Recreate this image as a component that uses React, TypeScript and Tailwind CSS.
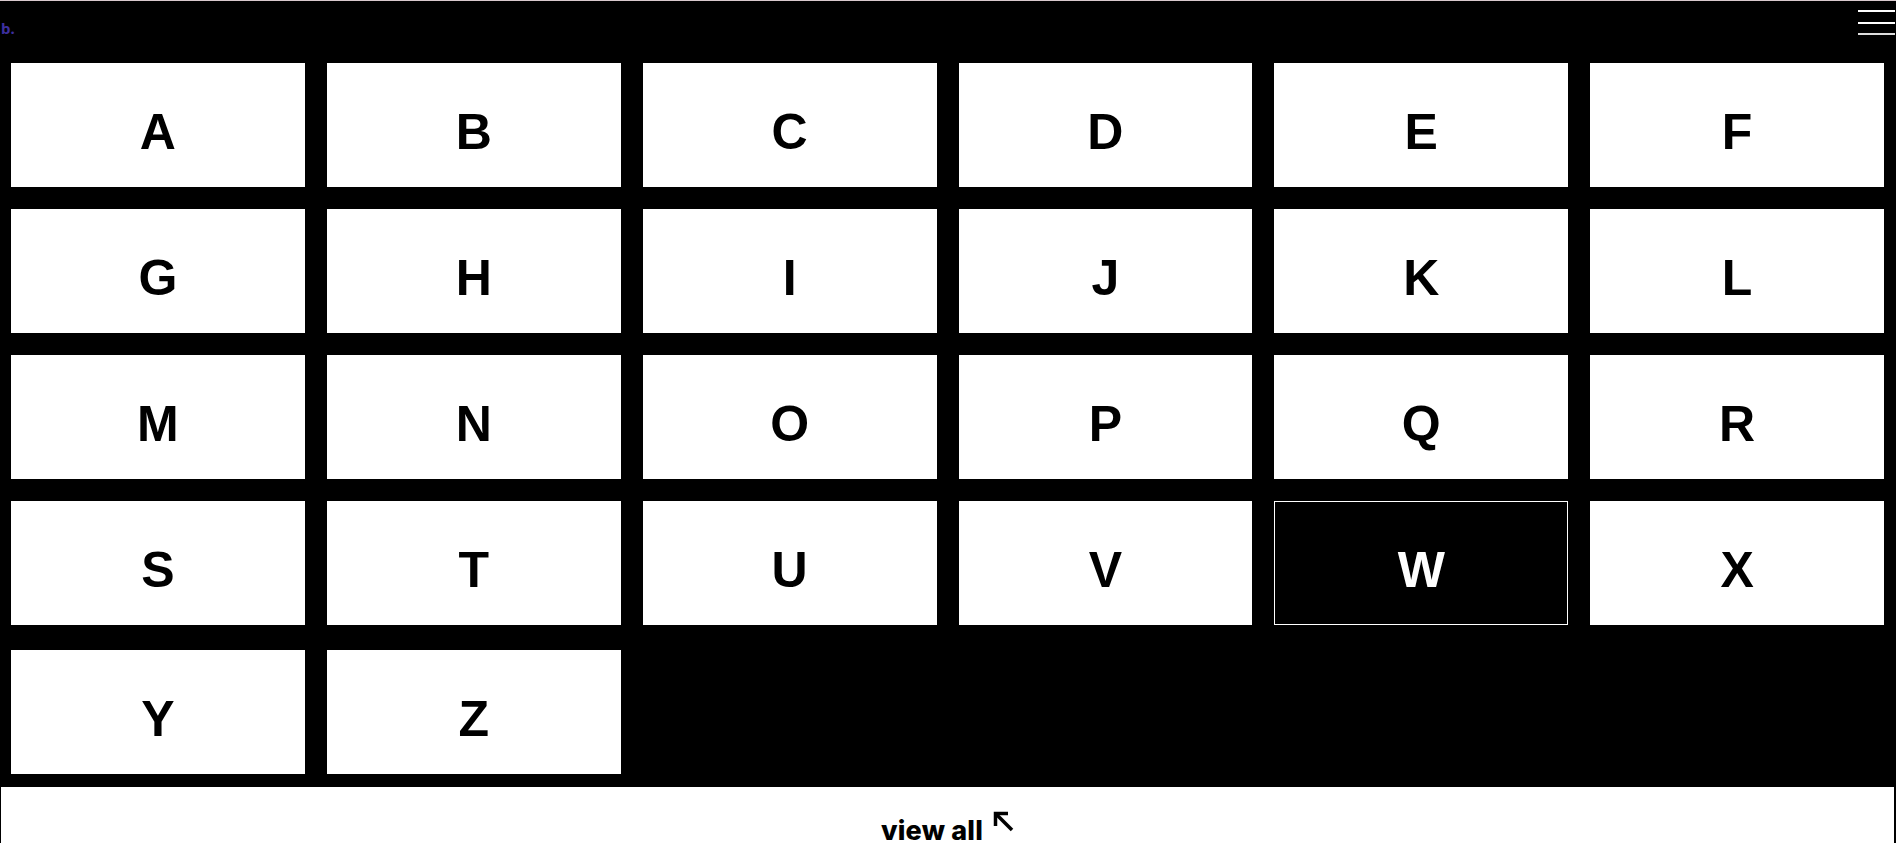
import React from "react";

const rows1 = "ABCDEFGHIJKLMNOPQRSTUVWX".split("");
const rows2 = ["Y", "Z"];

function Tile({ ch }: { ch: string }) {
  const active = ch === "W";
  return (
    <div
      className={
        "h-[124px] flex items-center justify-center pt-[13px] " +
        (active ? "bg-black border border-white text-white" : "bg-white text-black")
      }
    >
      <span
        className="text-[50px] leading-none font-bold"
        style={{ fontFamily: '"Liberation Sans", Arial, sans-serif' }}
      >
        {ch}
      </span>
    </div>
  );
}

export default function App() {
  return (
    <div className="min-h-screen bg-black overflow-hidden">
      <div className="h-[63px] border-t border-[#d9c9cd] flex items-start justify-between">
        <span
          className="ml-[1px] mt-[20px] text-[15px] font-bold text-[#3d2f9e] leading-none"
          style={{ fontFamily: '"Noto Sans", sans-serif' }}
        >
          b.
        </span>
        <div className="mt-[9px] mr-[1px] w-[37px] flex flex-col gap-[9.5px]">
          <div className="h-[2px] bg-white" />
          <div className="h-[2px] bg-white" />
          <div className="h-[2px] bg-[#dddddd]" />
        </div>
      </div>
      <div className="pl-[11px] pr-[12px]">
        <div className="grid grid-cols-6 gap-[22px]">
          {rows1.map((c) => (
            <Tile key={c} ch={c} />
          ))}
        </div>
        <div className="grid grid-cols-6 gap-[22px] mt-[25px] pb-[12px]">
          {rows2.map((c) => (
            <Tile key={c} ch={c} />
          ))}
        </div>
      </div>
      <button className="w-full h-[90px] bg-white border border-black border-r-2 flex items-start justify-center pt-[22px]">
        <span
          className="text-[27px] font-extrabold text-black leading-none flex items-start"
          style={{ fontFamily: 'Inter, "Noto Sans", sans-serif' }}
        >
          <span className="mt-[8px] tracking-[0.2px]">view all</span>
          <svg
            className="ml-[10px] mt-[2px]"
            width="21"
            height="21"
            viewBox="0 0 21 21"
            fill="none"
            stroke="black"
            strokeWidth="3.5"
            strokeLinecap="butt"
          >
            <path d="M2.5 2.5 L19 19" />
            <path d="M2.5 15 L2.5 2.5 L15 2.5" />
          </svg>
        </span>
      </button>
    </div>
  );
}
